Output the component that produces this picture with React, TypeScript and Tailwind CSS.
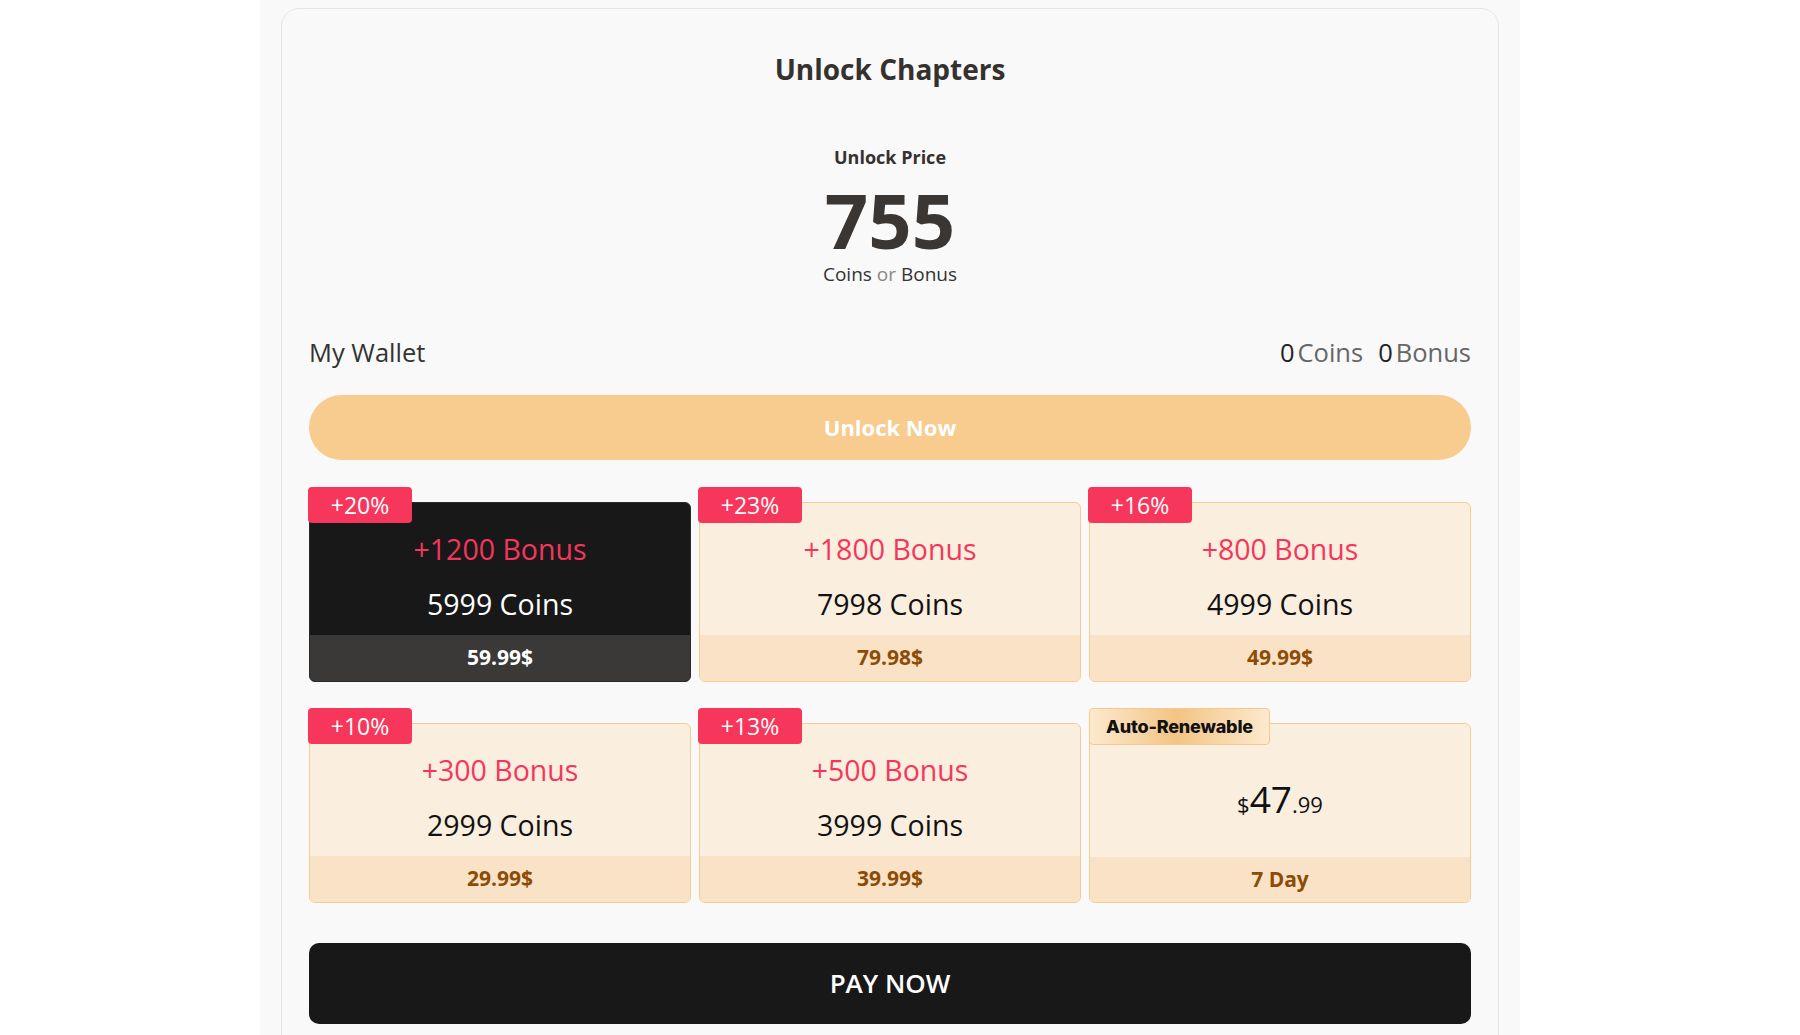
import React from "react";

type Pack = {
  tag: string;
  bonus: number;
  coins: number;
  price: string;
};

const packs: Pack[] = [
  { tag: "+20%", bonus: 1200, coins: 5999, price: "59.99$" },
  { tag: "+23%", bonus: 1800, coins: 7998, price: "79.98$" },
  { tag: "+16%", bonus: 800, coins: 4999, price: "49.99$" },
  { tag: "+10%", bonus: 300, coins: 2999, price: "29.99$" },
  { tag: "+13%", bonus: 500, coins: 3999, price: "39.99$" },
];

function PackCard({ pack, selected }: { pack: Pack; selected?: boolean }) {
  return (
    <div className="relative pt-[15px]">
      {/* discount tag */}
      <div className="absolute left-[-1px] top-0 z-10 flex h-[36px] w-[104px] items-center justify-center rounded-[4px] bg-[#f7365c] text-[23px] leading-none text-white">
        {pack.tag}
      </div>
      <div
        className={
          selected
            ? "overflow-hidden rounded-[6px] border border-[#2a2a2a] bg-[#181818]"
            : "overflow-hidden rounded-[6px] border border-[#f5cd93] bg-[#faeede]"
        }
      >
        <div className="flex h-[132px] flex-col items-center pt-[27px]">
          <div className="text-[28.5px] leading-[38px] text-[#f5365c]">
            +{pack.bonus} Bonus
          </div>
          <div
            className={
              selected
                ? "mt-[17px] text-[28.5px] leading-[38px] text-white"
                : "mt-[17px] text-[28.5px] leading-[38px] text-[#111]"
            }
          >
            {pack.coins} Coins
          </div>
        </div>
        <div
          className={
            selected
              ? "flex h-[46px] items-center justify-center bg-[#3a3938] text-[21px] font-bold text-white"
              : "flex h-[46px] items-center justify-center bg-[#f9e2c5] text-[21px] font-bold text-[#8c4c07]"
          }
        >
          {pack.price}
        </div>
      </div>
    </div>
  );
}

function RenewCard() {
  return (
    <div className="relative pt-[15px]">
      <div className="absolute left-0 top-0 z-10 flex h-[37px] w-[181px] items-center justify-center rounded-[4px] border border-[#f5c98a] bg-[linear-gradient(90deg,#fde9ce_0%,#f2c485_48%,#fde9ce_100%)] font-['Inter',sans-serif] text-[18px] font-extrabold tracking-[-0.2px] text-[#111]">
        Auto-Renewable
      </div>
      <div className="overflow-hidden rounded-[6px] border border-[#f5cd93] bg-[#faeede]">
        <div className="flex h-[133px] items-end justify-center pb-[42px] text-[#111]">
          <span className="text-[22px] leading-none">$</span>
          <span className="text-[37px] leading-[0.86]">47</span>
          <span className="text-[22px] leading-none">.99</span>
        </div>
        <div className="flex h-[45px] items-center justify-center bg-[#f9e2c5] text-[21px] font-bold text-[#8c4c07]">
          7 Day
        </div>
      </div>
    </div>
  );
}

export default function App() {
  return (
    <div className="h-[1035px] overflow-hidden bg-white font-['Open_Sans',sans-serif]">
      <div className="ml-[260px] h-full w-[1260px] bg-[#f9f9f9] px-[21px] pt-[8px]">
        <div className="h-[1100px] rounded-[18px] border border-[#e5e5e5] bg-[#f9f9f9] px-[27px] pt-[42px]">
          {/* header */}
          <div className="flex flex-col items-center">
            <h1 className="text-[28px] font-bold leading-[36px] text-[#35312f]">
              Unlock Chapters
            </h1>
            <div className="mt-[58px] text-[18px] font-bold leading-[24px] text-[#35312f]">
              Unlock Price
            </div>
            <div className="mt-[19px] text-[76px] font-bold leading-[64px] text-[#3a3634]">
              755
            </div>
            <div className="mt-[10px] text-[19px] leading-[24px] text-[#333]">
              Coins <span className="text-[#888]">or</span> Bonus
            </div>
          </div>

          {/* wallet */}
          <div className="mt-[50px] flex items-center justify-between text-[25.5px] leading-[32px]">
            <div className="text-[#333]">My Wallet</div>
            <div className="flex items-center gap-[15px]">
              <div>
                <span className="text-[#222]">0</span>
                <span className="ml-[3px] text-[#666]">Coins</span>
              </div>
              <div>
                <span className="text-[#222]">0</span>
                <span className="ml-[3px] text-[#666]">Bonus</span>
              </div>
            </div>
          </div>

          <button className="mt-[27px] flex h-[65px] w-full items-center justify-center rounded-full bg-[#f8cb8e] text-[22px] font-bold text-white">
            Unlock Now
          </button>

          {/* packages */}
          <div className="mt-[27px] grid grid-cols-3 gap-x-[8px] gap-y-[26px]">
            {packs.map((p, i) => (
              <PackCard key={p.tag} pack={p} selected={i === 0} />
            ))}
            <RenewCard />
          </div>

          <button className="mt-[40px] flex h-[81px] w-full items-center justify-center rounded-[10px] bg-[#181818] text-[26px] font-semibold text-white">
            PAY NOW
          </button>
        </div>
      </div>
    </div>
  );
}
